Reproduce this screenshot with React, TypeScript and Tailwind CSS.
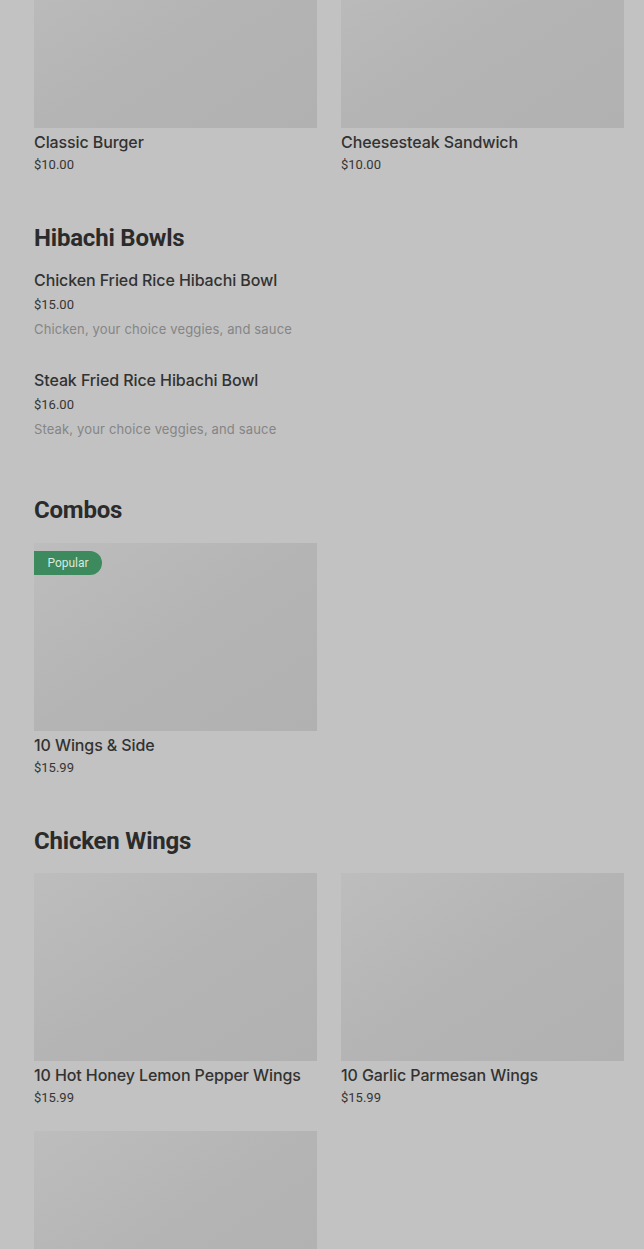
type Item = {
  name: string;
  price: string;
  popular?: boolean;
};

const font = { fontFamily: "Roboto, 'Liberation Sans', sans-serif" };

function Thumb({ popular }: { popular?: boolean }) {
  return (
    <div className="relative h-[188px] w-full bg-gradient-to-br from-[#bdbdbd] via-[#b4b4b4] to-[#b1b1b1]">
      {popular ? (
        <span className="absolute left-0 top-2 flex h-6 w-[68px] items-center justify-center rounded-r-full bg-[#3d8a5f] text-[12px] text-[#d9e9de]">
          Popular
        </span>
      ) : null}
    </div>
  );
}

function Card({ item }: { item: Item }) {
  return (
    <div>
      <Thumb popular={item.popular} />
      <p className="mt-1 font-['Inter',sans-serif] text-[16px] font-medium leading-5 tracking-[-0.1px] text-[#323232]">
        {item.name}
      </p>
      <p className="mt-1 text-[13px] leading-[18px] text-[#353535]">{item.price}</p>
    </div>
  );
}

function Grid({ items }: { items: Item[] }) {
  return (
    <div className="grid grid-cols-2 gap-x-6 gap-y-6">
      {items.map(item => (
        <Card key={item.name} item={item} />
      ))}
    </div>
  );
}

function Heading({ children }: { children: string }) {
  return <h2 className="text-[24px] font-bold leading-8 tracking-[-0.2px] text-[#2b2b2b]">{children}</h2>;
}

const bowls = [
  { name: "Chicken Fried Rice Hibachi Bowl", price: "$15.00", desc: "Chicken, your choice veggies, and sauce" },
  { name: "Steak Fried Rice Hibachi Bowl", price: "$16.00", desc: "Steak, your choice veggies, and sauce" },
];

export default function App() {
  return (
    <div className="h-[1249px] overflow-hidden bg-[#c2c2c2]" style={font}>
      <div className="-mt-[60px] pl-[34px] pr-5">
        <Grid
          items={[
            { name: "Classic Burger", price: "$10.00" },
            { name: "Cheesesteak Sandwich", price: "$10.00" },
          ]}
        />

        <section className="mt-12">
          <Heading>Hibachi Bowls</Heading>
          <div className="mt-4 space-y-8">
            {bowls.map(b => (
              <div key={b.name}>
                <p className="font-['Inter',sans-serif] text-[16px] font-medium leading-5 tracking-[-0.1px] text-[#323232]">
                  {b.name}
                </p>
                <p className="mt-1.5 text-[13px] leading-[18px] text-[#353535]">{b.price}</p>
                <p className="mt-1.5 font-['Inter',sans-serif] text-[13px] leading-[18px] tracking-[0.15px] text-[#858585]">
                  {b.desc}
                </p>
              </div>
            ))}
          </div>
        </section>

        <section className="mt-14">
          <Heading>Combos</Heading>
          <div className="mt-[17px]">
            <Grid items={[{ name: "10 Wings & Side", price: "$15.99", popular: true }]} />
          </div>
        </section>

        <section className="mt-12">
          <Heading>Chicken Wings</Heading>
          <div className="mt-4">
            <Grid
              items={[
                { name: "10 Hot Honey Lemon Pepper Wings", price: "$15.99" },
                { name: "10 Garlic Parmesan Wings", price: "$15.99" },
              ]}
            />
            <div className="mt-6 grid grid-cols-2 gap-x-6">
              <Thumb />
            </div>
          </div>
        </section>
      </div>
    </div>
  );
}
